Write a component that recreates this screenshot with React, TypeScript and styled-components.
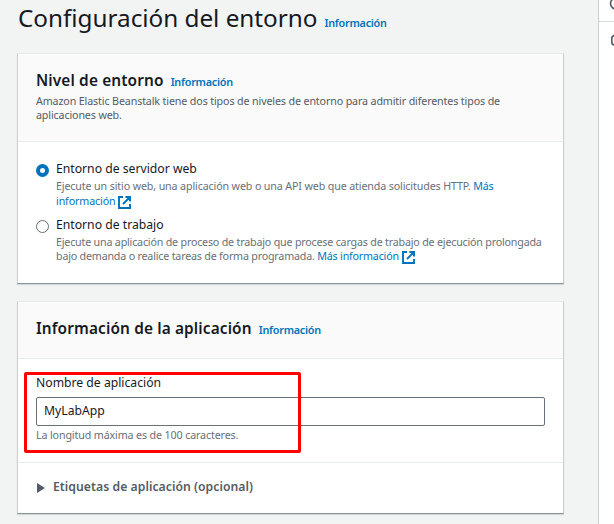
import React from 'react';
import styled, { createGlobalStyle } from 'styled-components';

const GlobalStyle = createGlobalStyle`
  * { box-sizing: border-box; }
  html, body { margin: 0; background: #f2f3f3; }
  body { font-family: 'Noto Sans', 'Open Sans', sans-serif; color: #16191f; overflow: hidden; }
`;

const Page = styled.div`
  display: grid;
  grid-template-columns: 598px 16px;
  height: 524px;
  overflow: hidden;
`;

const Main = styled.main`
  display: flex;
  flex-direction: column;
  padding: 0 34px 0 17px;
`;

const TitleRow = styled.header`
  display: flex;
  align-items: baseline;
  height: 53px;
  padding-left: 1px;
`;

const Title = styled.h1`
  margin: 0;
  font-size: 24.3px;
  font-weight: 400;
  line-height: 36px;
  letter-spacing: -0.02px;
  white-space: nowrap;
`;

const InfoLink = styled.a`
  margin-left: 7px;
  font-size: 10.8px;
  font-weight: 600;
  letter-spacing: -0.25px;
  line-height: 14px;
  color: #0073bb;
  white-space: nowrap;
`;

const Card = styled.section<{ $height: number }>`
  display: flex;
  flex-direction: column;
  height: ${(p) => p.$height}px;
  margin-bottom: 17px;
  background: #fff;
  border: 1px solid #ccd0d0;
  border-top-color: #e8eaea;
  border-bottom-color: #879596;
  box-shadow: 0 1px 1px rgba(0, 28, 36, 0.12);
`;

const CardHeader = styled.div<{ $height: number }>`
  height: ${(p) => p.$height}px;
  flex: none;
  padding: 16px 18px 0;
  background: #fafafa;
  border-bottom: 1px solid #eaeded;
`;

const HeadingRow = styled.div`
  display: flex;
  align-items: baseline;
  height: 24px;
`;

const Heading = styled.h2`
  margin: 0;
  font-size: 15.4px;
  font-weight: 600;
  line-height: 22px;
  letter-spacing: 0.13px;
  white-space: nowrap;
`;

const Hint = styled.p<{ $spacing?: number; $color?: string; $lineHeight?: number }>`
  margin: 0;
  font-size: 10.7px;
  line-height: ${(p) => p.$lineHeight ?? 14}px;
  letter-spacing: ${(p) => p.$spacing ?? -0.13}px;
  color: ${(p) => p.$color ?? '#687078'};
  white-space: nowrap;
`;

const Link = styled.a`
  color: #0073bb;
`;

const Options = styled.div`
  display: flex;
  flex-direction: column;
  padding: 18px 18px 0;
`;

const Option = styled.label`
  display: grid;
  grid-template-columns: 20px 1fr;
  height: 56px;
`;

const Radio = styled.input`
  appearance: none;
  width: 13px;
  height: 13px;
  margin: 4px 0 0;
  border: 1px solid #687078;
  border-radius: 50%;
  background: #fff;
  &:checked { border: 4px solid #0073bb; }
`;

const OptionTitle = styled.div`
  height: 19px;
  font-size: 12.2px;
  line-height: 17px;
  white-space: nowrap;
`;

const Icon = styled.svg`
  width: 13px;
  height: 13px;
  margin-left: 3px;
  vertical-align: -4px;
  fill: none;
  stroke: #0073bb;
  stroke-width: 1.9;
`;

const Field = styled.div`
  height: 104px;
  padding: 15px 18px 0;
  border-bottom: 1px solid #eaeded;
`;

const FieldLabel = styled.label`
  display: block;
  font-size: 12.2px;
  line-height: 17px;
  height: 23px;
`;

const TextInput = styled.input`
  display: block;
  width: 509px;
  height: 29px;
  margin: 0 0 2px;
  padding: 0 7px 3px;
  border: 1px solid #687078;
  border-radius: 2px;
  outline: none;
  background: #fff;
  color: #16191f;
  font: 12.2px 'Noto Sans', sans-serif;
`;

const Expander = styled.div`
  display: flex;
  align-items: center;
  gap: 8px;
  height: 46px;
  padding-left: 19px;
  color: #545b64;
  font-size: 12.2px;
  font-weight: 600;
  letter-spacing: 0.05px;
`;

const Caret = styled.svg`
  width: 8px;
  height: 10px;
  margin-top: 3px;
  fill: #545b64;
`;

const SidePanel = styled.aside`
  background: #fff;
  border-left: 1px solid #ccd0d0;
  overflow: hidden;
`;

const SideCell = styled.div<{ $divider?: boolean }>`
  height: ${(p) => (p.$divider ? 22 : 40)}px;
  border-bottom: ${(p) => (p.$divider ? '1px solid #d5dbdb' : 'none')};
`;

const SideIcon = styled.svg`
  display: block;
  width: 15px;
  height: 40px;
  fill: none;
  stroke: #545b64;
  stroke-width: 1.6;
`;

const Highlight = styled.div`
  position: absolute;
  left: 24px;
  top: 372px;
  width: 277px;
  height: 81px;
  border: 3px solid #f00;
  border-radius: 2px;
  pointer-events: none;
`;

const ExternalIcon = () => (
  <Icon viewBox="0 0 13 13">
    <path d="M5 1H1v11h11V8M7.4 1H12v4.6M12 1 5 8" />
  </Icon>
);

export default function App() {
  return (
    <>
      <GlobalStyle />
      <Page>
        <Main>
          <TitleRow>
            <Title>Configuración del entorno</Title>
            <InfoLink>Información</InfoLink>
          </TitleRow>

          <Card $height={231}>
            <CardHeader $height={88}>
              <HeadingRow>
                <Heading>Nivel de entorno</Heading>
                <InfoLink>Información</InfoLink>
              </HeadingRow>
              <Hint $color="#545b64">
                Amazon Elastic Beanstalk tiene dos tipos de niveles de entorno para admitir diferentes tipos de
                <br />
                aplicaciones web.
              </Hint>
            </CardHeader>
            <Options>
              <Option>
                <Radio type="radio" name="tier" defaultChecked />
                <div>
                  <OptionTitle>Entorno de servidor web</OptionTitle>
                  <Hint $lineHeight={15}>
                    Ejecute un sitio web, una aplicación web o una API web que atienda solicitudes HTTP. <Link>Más</Link>
                    <br />
                    <Link>información<ExternalIcon /></Link>
                  </Hint>
                </div>
              </Option>
              <Option>
                <Radio type="radio" name="tier" />
                <div>
                  <OptionTitle>Entorno de trabajo</OptionTitle>
                  <Hint $spacing={-0.19}>
                    Ejecute una aplicación de proceso de trabajo que procese cargas de trabajo de ejecución prolongada
                    <br />
                    bajo demanda o realice tareas de forma programada. <Link>Más información<ExternalIcon /></Link>
                  </Hint>
                </div>
              </Option>
            </Options>
          </Card>

          <Card $height={213}>
            <CardHeader $height={57}>
              <HeadingRow>
                <Heading>Información de la aplicación</Heading>
                <InfoLink>Información</InfoLink>
              </HeadingRow>
            </CardHeader>
            <Field>
              <FieldLabel htmlFor="app-name">Nombre de aplicación</FieldLabel>
              <TextInput id="app-name" defaultValue="MyLabApp" />
              <Hint>La longitud máxima es de 100 caracteres.</Hint>
            </Field>
            <Expander>
              <Caret viewBox="0 0 8 10"><path d="M0 0 8 5 0 10Z" /></Caret>
              <span>Etiquetas de aplicación (opcional)</span>
            </Expander>
          </Card>
        </Main>
        <SidePanel>
          <SideCell $divider>
            <SideIcon viewBox="0 0 15 40"><circle cx="17" cy="3.5" r="5.5" /></SideIcon>
          </SideCell>
          <SideCell>
            <SideIcon viewBox="0 0 15 40"><rect x="12.8" y="13.5" width="10" height="9.5" rx="3" /></SideIcon>
          </SideCell>
        </SidePanel>
      </Page>
      <Highlight />
    </>
  );
}
